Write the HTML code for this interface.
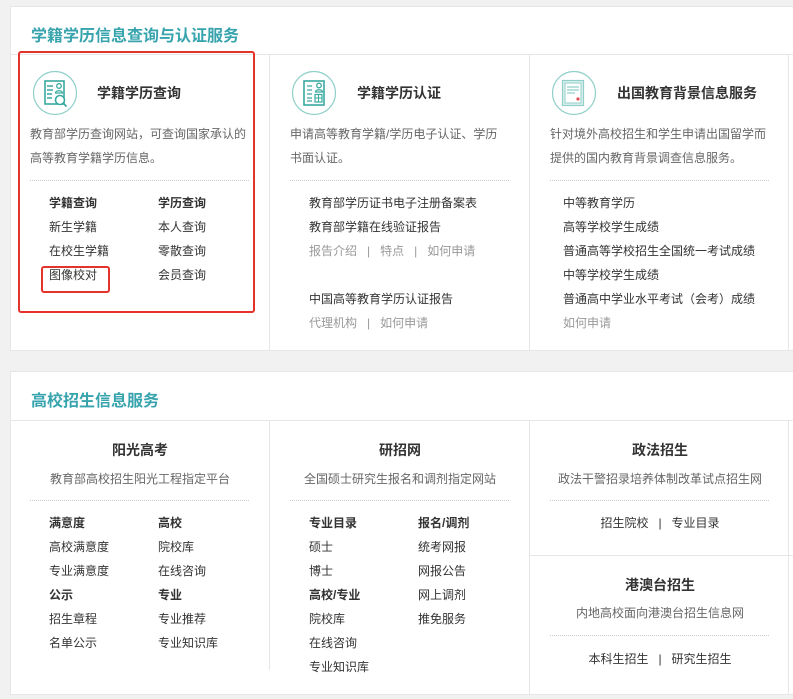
<!DOCTYPE html>
<html><head><meta charset="utf-8"><style>
*{margin:0;padding:0;box-sizing:border-box}
body{width:793px;height:699px;background:#f1f1f1;position:relative;overflow:hidden;font-family:"Liberation Sans","Noto Sans CJK SC",sans-serif;color:#333;font-size:12px}
.p{position:absolute;background:#fff;left:10px;width:800px;border:1px solid #e6e6e6}
.h{position:absolute;left:20px;color:#36a3ad;font-size:16px;font-weight:bold;white-space:nowrap}
.hl{position:absolute;left:0;right:0;height:1px;background:#e6e6e6}
.v{position:absolute;width:1px;background:#e6e6e6}
.t{position:absolute;font-size:14px;font-weight:bold;color:#333;white-space:nowrap}
.d{position:absolute;color:#666;font-size:12px;white-space:nowrap;line-height:24px}
.dot{position:absolute;border-top:1px dotted #ccc;width:219px}
.a{position:absolute;white-space:nowrap;font-size:12px;line-height:24px;color:#333}
.b{font-weight:bold}
.g{color:#999}
.c{text-align:center;width:260px}
.r{position:absolute;border:2.5px solid #e4332a;border-radius:3px}
svg{position:absolute}
</style></head><body>
<div class="p" style="top:6px;height:345px">
<div class="h" style="top:15px">学籍学历信息查询与认证服务</div>
<div class="hl" style="top:47px"></div>
<div class="v" style="left:258px;top:48px;bottom:0"></div>
<div class="v" style="left:518px;top:48px;bottom:0"></div>
<div class="v" style="left:777px;top:48px;bottom:0"></div>
</div>
<!-- col1 -->
<svg style="left:32px;top:70px" width="46" height="46" viewBox="0 0 46 46"><circle cx="23" cy="23" r="21.5" fill="none" stroke="#8fcfc9" stroke-width="1.2"/><rect x="13" y="11" width="19" height="23" fill="none" stroke="#3aa9a0" stroke-width="1.6"/><path d="M15 16h6M15 20h6M15 24h5M15 28h5" stroke="#3aa9a0" stroke-width="1.4"/><circle cx="27" cy="16" r="2.3" fill="none" stroke="#3aa9a0" stroke-width="1.3"/><path d="M23.5 23c0-3 7-3 7 0z" fill="none" stroke="#3aa9a0" stroke-width="1.3"/><circle cx="28" cy="30" r="4.5" fill="#fff" stroke="#3aa9a0" stroke-width="1.6"/><path d="M31 33l3.5 3.5" stroke="#3aa9a0" stroke-width="1.8"/></svg>
<div class="t" style="left:97px;top:83px">学籍学历查询</div>
<div class="d" style="left:30px;top:122px">教育部学历查询网站，可查询国家承认的<br>高等教育学籍学历信息。</div>
<div class="dot" style="left:30px;top:180px"></div>
<div class="a" style="left:49px;top:191px"><span class="b">学籍查询</span><br>新生学籍<br>在校生学籍<br>图像校对</div>
<div class="a" style="left:158px;top:191px"><span class="b">学历查询</span><br>本人查询<br>零散查询<br>会员查询</div>
<div class="r" style="left:18px;top:51px;width:237px;height:262px"></div>
<div class="r" style="left:41px;top:266px;width:69px;height:27px"></div>
<!-- col2 -->
<svg style="left:291px;top:70px" width="46" height="46" viewBox="0 0 46 46"><circle cx="23" cy="23" r="21.5" fill="none" stroke="#8fcfc9" stroke-width="1.2"/><rect x="13" y="11" width="20" height="24" fill="none" stroke="#3aa9a0" stroke-width="1.6"/><path d="M16 16h5M16 20h5M16 24h5M16 28h5M16 31h5" stroke="#3aa9a0" stroke-width="1.3"/><circle cx="28" cy="15.5" r="2.3" fill="none" stroke="#3aa9a0" stroke-width="1.3"/><path d="M24.5 22c0-3 7-3 7 0z" fill="none" stroke="#3aa9a0" stroke-width="1.3"/><rect x="24" y="24.5" width="7" height="7.5" fill="none" stroke="#3aa9a0" stroke-width="1.2"/><path d="M24 28h7M27.5 24.5v7.5" stroke="#3aa9a0" stroke-width="1"/></svg>
<div class="t" style="left:357px;top:83px">学籍学历认证</div>
<div class="d" style="left:290px;top:122px">申请高等教育学籍/学历电子认证、学历<br>书面认证。</div>
<div class="dot" style="left:290px;top:180px"></div>
<div class="a" style="left:309px;top:191px">教育部学历证书电子注册备案表<br>教育部学籍在线验证报告<br><span class="g">报告介绍 &nbsp; | &nbsp; 特点 &nbsp; | &nbsp; 如何申请</span></div>
<div class="a" style="left:309px;top:287px">中国高等教育学历认证报告<br><span class="g">代理机构 &nbsp; | &nbsp; 如何申请</span></div>
<!-- col3 -->
<svg style="left:551px;top:70px" width="46" height="46" viewBox="0 0 46 46"><circle cx="23" cy="23" r="21.5" fill="none" stroke="#8fcfc9" stroke-width="1.2"/><rect x="11.5" y="10.5" width="21" height="25" fill="#dff0ee" stroke="#8fcfc9" stroke-width="1.2"/><rect x="14" y="13" width="16" height="20" fill="#fff" stroke="#8fcfc9" stroke-width="1"/><path d="M16 17h12M16 20h12M16 23h8" stroke="#8fcfc9" stroke-width="1.2"/><circle cx="27" cy="29" r="1.6" fill="#e0505a"/></svg>
<div class="t" style="left:617px;top:83px">出国教育背景信息服务</div>
<div class="d" style="left:550px;top:122px">针对境外高校招生和学生申请出国留学而<br>提供的国内教育背景调查信息服务。</div>
<div class="dot" style="left:550px;top:180px"></div>
<div class="a" style="left:563px;top:191px">中等教育学历<br>高等学校学生成绩<br>普通高等学校招生全国统一考试成绩<br>中等学校学生成绩<br>普通高中学业水平考试（会考）成绩<br><span class="g">如何申请</span></div>

<!-- panel 2 -->
<div class="p" style="top:371px;height:324px">
<div class="h" style="top:15px">高校招生信息服务</div>
<div class="hl" style="top:48px"></div>
<div class="v" style="left:258px;top:49px;bottom:24px"></div>
<div class="v" style="left:518px;top:49px;bottom:0"></div>
<div class="v" style="left:777px;top:49px;bottom:0"></div>
<div style="position:absolute;left:519px;right:0;top:183px;height:1px;background:#e6e6e6"></div>
</div>
<div class="t c" style="left:10px;top:440px">阳光高考</div>
<div class="d c" style="left:10px;top:467px">教育部高校招生阳光工程指定平台</div>
<div class="dot" style="left:30px;top:500px"></div>
<div class="a" style="left:49px;top:511px"><span class="b">满意度</span><br>高校满意度<br>专业满意度<br><span class="b">公示</span><br>招生章程<br>名单公示</div>
<div class="a" style="left:158px;top:511px"><span class="b">高校</span><br>院校库<br>在线咨询<br><span class="b">专业</span><br>专业推荐<br>专业知识库</div>

<div class="t c" style="left:270px;top:440px">研招网</div>
<div class="d c" style="left:270px;top:467px">全国硕士研究生报名和调剂指定网站</div>
<div class="dot" style="left:290px;top:500px"></div>
<div class="a" style="left:309px;top:511px"><span class="b">专业目录</span><br>硕士<br>博士<br><span class="b">高校/专业</span><br>院校库<br>在线咨询<br>专业知识库</div>
<div class="a" style="left:418px;top:511px"><span class="b">报名/调剂</span><br>统考网报<br>网报公告<br>网上调剂<br>推免服务</div>

<div class="t c" style="left:530px;top:440px">政法招生</div>
<div class="d c" style="left:530px;top:467px">政法干警招录培养体制改革试点招生网</div>
<div class="dot" style="left:550px;top:500px"></div>
<div class="a c" style="left:530px;top:511px">招生院校 &nbsp; | &nbsp; 专业目录</div>
<div class="t c" style="left:530px;top:575px">港澳台招生</div>
<div class="d c" style="left:530px;top:601px">内地高校面向港澳台招生信息网</div>
<div class="dot" style="left:550px;top:635px"></div>
<div class="a c" style="left:530px;top:647px">本科生招生 &nbsp; | &nbsp; 研究生招生</div>
</body></html>
